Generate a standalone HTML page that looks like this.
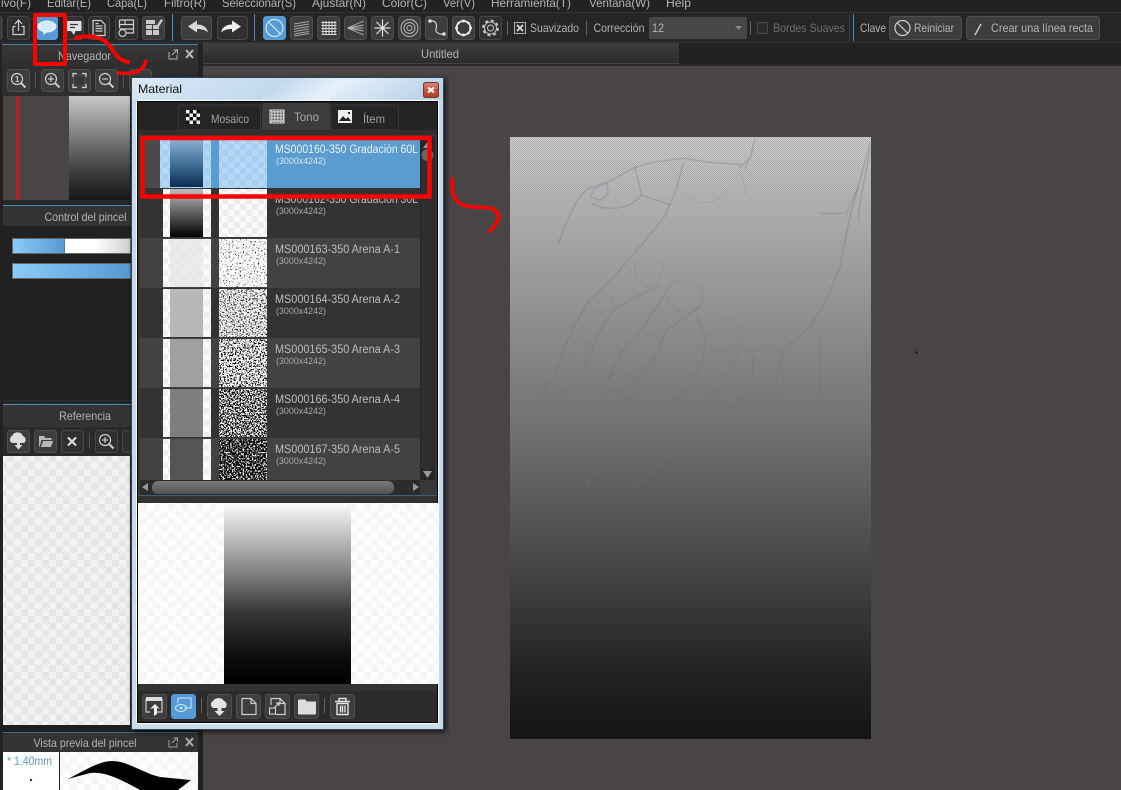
<!DOCTYPE html>
<html lang="es"><head><meta charset="utf-8"><title>Material</title>
<style>
html,body{margin:0;padding:0;background:#4a4545;width:1121px;height:790px;overflow:hidden}
svg{display:block;font-family:"Liberation Sans",sans-serif;filter:blur(.3px)}
.b{fill:#3d3d3d;stroke:#4f4f4f;stroke-width:1}
.d{fill:#303030;stroke:#484848;stroke-width:1}
.bl{fill:#569bd6;stroke:#569bd6;stroke-width:1}
.t{fill:#b4b4b4;font-size:12px}
.g{fill:none;stroke:#cfcfcf;stroke-width:1.2}
.w{fill:#e0e0e0}
.n{fill:#bdbdbd;font-size:11.500px}
.s{fill:#a8a8a8;font-size:9.500px}
.sk{fill:none;stroke:#6c6c8c;stroke-opacity:.3;stroke-width:4.500;stroke-linejoin:round;stroke-linecap:round}
.skf{fill:none;stroke:#6c6c8c;stroke-opacity:.16;stroke-width:3.500;stroke-linejoin:round}
.r{fill:none;stroke:#f00;stroke-linecap:round;stroke-linejoin:round}
</style></head><body>
<svg xmlns="http://www.w3.org/2000/svg" width="1121" height="790" viewBox="0 0 1121 790">
<defs>
<pattern id="ck" width="14" height="14" patternUnits="userSpaceOnUse"><rect width="14" height="14" fill="#f2f2f2"/><rect width="7" height="7" fill="#e6e6e6"/><rect x="7" y="7" width="7" height="7" fill="#e6e6e6"/></pattern>
<pattern id="ck2" width="14" height="14" patternUnits="userSpaceOnUse"><rect width="14" height="14" fill="#fff"/><rect width="7" height="7" fill="#f6f6f6"/><rect x="7" y="7" width="7" height="7" fill="#f6f6f6"/></pattern>
<pattern id="ck3" width="12" height="12" patternUnits="userSpaceOnUse"><rect width="12" height="12" fill="#fbfbfb"/><rect width="6" height="6" fill="#eee"/><rect x="6" y="6" width="6" height="6" fill="#eee"/></pattern>
<pattern id="ckb" width="12" height="12" patternUnits="userSpaceOnUse"><rect width="12" height="12" fill="#b5d9f5"/><rect width="6" height="6" fill="#a6cef0"/><rect x="6" y="6" width="6" height="6" fill="#a6cef0"/></pattern>
<pattern id="ht" width="2" height="2" patternUnits="userSpaceOnUse"><rect width="1" height="1" fill="#000" fill-opacity=".1"/><rect x="1" y="1" width="1" height="1" fill="#000" fill-opacity=".1"/></pattern>
<pattern id="dots" width="3" height="3" patternUnits="userSpaceOnUse"><rect width="3" height="3" fill="#2a2a2a"/><rect width="1" height="1" fill="#111"/></pattern>
<linearGradient id="cv" x1="0" y1="0" x2="0" y2="1"><stop offset="0" stop-color="#cacaca"/><stop offset=".25" stop-color="#9f9f9f"/><stop offset=".5" stop-color="#747474"/><stop offset=".75" stop-color="#424242"/><stop offset=".9" stop-color="#222"/><stop offset="1" stop-color="#161616"/></linearGradient>
<linearGradient id="mini" x1="0" y1="0" x2="0" y2="1"><stop offset="0" stop-color="#c8c8c8"/><stop offset=".35" stop-color="#858585"/><stop offset=".7" stop-color="#424242"/><stop offset="1" stop-color="#161616"/></linearGradient>
<linearGradient id="gp" x1="0" y1="0" x2="0" y2="1"><stop offset="0" stop-color="#fbfbfb"/><stop offset=".12" stop-color="#d4d4d4"/><stop offset=".35" stop-color="#8c8c8c"/><stop offset=".6" stop-color="#383838"/><stop offset=".85" stop-color="#0c0c0c"/><stop offset="1" stop-color="#000"/></linearGradient>
<linearGradient id="gb" x1="0" y1="0" x2="0" y2="1"><stop offset="0" stop-color="#8fb4d4"/><stop offset=".5" stop-color="#47749c"/><stop offset="1" stop-color="#082c52"/></linearGradient>
<linearGradient id="gk" x1="0" y1="0" x2="0" y2="1"><stop offset="0" stop-color="#bdbdbd"/><stop offset=".5" stop-color="#5f5f5f"/><stop offset="1" stop-color="#000"/></linearGradient>
<linearGradient id="hd" x1="0" y1="0" x2="0" y2="1"><stop offset="0" stop-color="#383838"/><stop offset="1" stop-color="#2e2e2e"/></linearGradient>
<linearGradient id="tab" x1="0" y1="0" x2="0" y2="1"><stop offset="0" stop-color="#3e3e3e"/><stop offset="1" stop-color="#2b2b2b"/></linearGradient>
<linearGradient id="bfill" x1="0" y1="0" x2="1" y2="0"><stop offset="0" stop-color="#8bcbf9"/><stop offset="1" stop-color="#569ad4"/></linearGradient>
<linearGradient id="wfade" x1="0" y1="0" x2="1" y2="0"><stop offset=".7" stop-color="#fff"/><stop offset="1" stop-color="#d0d0d0"/></linearGradient>
<linearGradient id="glass" x1="0" y1="0" x2="1" y2="0.1"><stop offset="0" stop-color="#d9e8f5"/><stop offset=".5" stop-color="#c2d9ee"/><stop offset=".68" stop-color="#e6f0f9"/><stop offset="1" stop-color="#bcd4ea"/></linearGradient>
<linearGradient id="cl" x1="0" y1="0" x2="0" y2="1"><stop offset="0" stop-color="#d98a75"/><stop offset=".5" stop-color="#c4553c"/><stop offset="1" stop-color="#b33e28"/></linearGradient>
<linearGradient id="thb" x1="0" y1="0" x2="0" y2="1"><stop offset="0" stop-color="#7a7a7a"/><stop offset="1" stop-color="#545454"/></linearGradient>
<filter id="shadow" x="-10%" y="-10%" width="125%" height="120%"><feDropShadow dx="2" dy="2" stdDeviation="3" flood-color="#000" flood-opacity=".7"/></filter>
<filter id="n1" x="0" y="0" width="100%" height="100%" color-interpolation-filters="sRGB"><feTurbulence type="fractalNoise" baseFrequency=".65" numOctaves="2" seed="3"/><feColorMatrix values="6 0 0 0 -1.400 6 0 0 0 -1.400 6 0 0 0 -1.400 0 0 0 0 1"/></filter>
<filter id="n2" x="0" y="0" width="100%" height="100%" color-interpolation-filters="sRGB"><feTurbulence type="fractalNoise" baseFrequency=".65" numOctaves="2" seed="8"/><feColorMatrix values="4 0 0 0 -1.100 4 0 0 0 -1.100 4 0 0 0 -1.100 0 0 0 0 1"/></filter>
<filter id="n3" x="0" y="0" width="100%" height="100%" color-interpolation-filters="sRGB"><feTurbulence type="fractalNoise" baseFrequency=".65" numOctaves="2" seed="12"/><feColorMatrix values="10 0 0 0 -3.900 10 0 0 0 -3.900 10 0 0 0 -3.900 0 0 0 0 1"/></filter>
<filter id="n4" x="0" y="0" width="100%" height="100%" color-interpolation-filters="sRGB"><feTurbulence type="fractalNoise" baseFrequency=".65" numOctaves="2" seed="21"/><feColorMatrix values="9 0 0 0 -4 9 0 0 0 -4 9 0 0 0 -4 0 0 0 0 1"/></filter>
<filter id="n5" x="0" y="0" width="100%" height="100%" color-interpolation-filters="sRGB"><feTurbulence type="fractalNoise" baseFrequency=".65" numOctaves="2" seed="33"/><feColorMatrix values="6 0 0 0 -2.900 6 0 0 0 -2.900 6 0 0 0 -2.900 0 0 0 0 1"/></filter>
</defs>

<!-- base -->
<rect width="1121" height="790" fill="#4a4545"/>
<rect width="1121" height="65" fill="#222"/>
<rect y="12" width="1121" height="30" fill="#252525"/>
<rect y="12" width="1121" height="1" fill="#333"/>
<rect y="42" width="1121" height="1" fill="#333"/>

<!-- menu -->
<text x="1" y="7" class="t" textLength="30" lengthAdjust="spacingAndGlyphs">ivo(F)</text>
<text x="47" y="7" class="t" textLength="44" lengthAdjust="spacingAndGlyphs">Editar(E)</text>
<text x="107" y="7" class="t" textLength="40" lengthAdjust="spacingAndGlyphs">Capa(L)</text>
<text x="164" y="7" class="t" textLength="42" lengthAdjust="spacingAndGlyphs">Filtro(R)</text>
<text x="222" y="7" class="t" textLength="74" lengthAdjust="spacingAndGlyphs">Seleccionar(S)</text>
<text x="312" y="7" class="t" textLength="54" lengthAdjust="spacingAndGlyphs">Ajustar(N)</text>
<text x="382" y="7" class="t" textLength="45" lengthAdjust="spacingAndGlyphs">Color(C)</text>
<text x="443" y="7" class="t" textLength="32" lengthAdjust="spacingAndGlyphs">Ver(V)</text>
<text x="491" y="7" class="t" textLength="80" lengthAdjust="spacingAndGlyphs">Herramienta(T)</text>
<text x="589" y="7" class="t" textLength="61" lengthAdjust="spacingAndGlyphs">Ventana(W)</text>
<text x="666" y="7" class="t" textLength="25" lengthAdjust="spacingAndGlyphs">Help</text>

<!-- toolbar buttons -->
<rect x="-20" y="16.500" width="22" height="23" rx="3" class="b"/>
<rect x="7.500" y="16.500" width="22" height="23" rx="3" class="d"/>
<path d="M13 26.500v8h11v-8h-2.500M15.500 26.500H13M18.500 31V20.500M15 24l3.500-4 3.500 4" class="g" stroke-width="1.500"/>
<rect x="36.500" y="16.500" width="21" height="23" rx="3" class="bl"/>
<ellipse cx="47" cy="26.500" rx="9.500" ry="6" fill="#e0f0fb"/><path d="M43 31l.5 4 4.500-3.500z" fill="#e0f0fb"/>
<path d="M41 26.500h12M40 24h14M40 29h13" stroke="#a9d3ef" stroke-width=".6" fill="none"/>
<rect x="63.500" y="16.500" width="20" height="23" rx="3" class="d"/>
<path d="M67 21h13.500a1 1 0 0 1 1 1v8a1 1 0 0 1-1 1h-5l-1.500 4-3-4h-4a1 1 0 0 1-1-1v-8a1 1 0 0 1 1-1z" class="w"/>
<path d="M70 24.500h8M70 27.500h5" stroke="#333" stroke-width="1.300"/>
<rect x="88.500" y="16.500" width="21" height="23" rx="3" class="d"/>
<path d="M93 20.500h8l4 4v11h-12z M95.500 26h7M95.500 28.500h7M95.500 31h7M95.500 23.500h3" class="g" stroke-width="1"/>
<rect x="115.500" y="16.500" width="22" height="23" rx="3" class="d"/>
<path d="M119.500 20h14v13h-7M119.500 20v8M119.500 24.500h14M119.500 29h14M125 20v5" class="g" stroke-width="1"/><circle cx="122.500" cy="33" r="3.500" class="g" stroke-width="1"/>
<rect x="142.500" y="16.500" width="22" height="23" rx="3" class="b"/>
<path d="M146 25h6v4h-6zM153 25h6v4h-6zM146 30h6v5h-6zM153 30h6v5h-6zM146 20h9v4h-9z" fill="#c8c8c8"/><path d="M157 25l4-6 2 1.500-4 6z" fill="#c8c8c8"/>
<rect x="172" y="14" width="1" height="27" fill="#4b8ab8"/>
<rect x="181.500" y="16.500" width="30" height="23" rx="3" class="b"/>
<path d="M188 26.500l9-6v4c6 0 10 3 11 8-3-2.500-6-3.500-11-3.500v3.500z" fill="#d8d8d8"/>
<rect x="217.500" y="16.500" width="30" height="23" rx="3" class="d"/>
<path d="M241 26.500l-9-6v4c-6 0-10 3-11 8 3-2.500 6-3.500 11-3.500v3.500z" fill="#eee"/>
<rect x="254" y="14" width="1" height="27" fill="#4b8ab8"/>
<rect x="263.500" y="16.500" width="22" height="23" rx="3" class="bl"/>
<circle cx="274.500" cy="28" r="8.500" fill="none" stroke="#cfe8f8" stroke-width="1.200"/><path d="M268.500 22l12 12" stroke="#cfe8f8" stroke-width="1.200"/>
<rect x="290.500" y="16.500" width="22" height="23" rx="3" class="b"/>
<path d="M294 24l15-2.500M294 26.500l15-2.500M294 29l15-2.500M294 31.500l15-2.500M294 34l15-2.500M294 36l15-2.500" stroke="#a8a8a8" stroke-width=".9" fill="none"/>
<rect x="317.500" y="16.500" width="22" height="23" rx="3" class="b"/>
<path d="M323 21v14M326 21v14M329 21v14M332 21v14M335 21v14M321.500 22.500h15M321.500 25.500h15M321.500 28.500h15M321.500 31.500h15M321.500 34.500h15" stroke="#dcdcdc" stroke-width="1" fill="none"/>
<rect x="344.500" y="16.500" width="22" height="23" rx="3" class="b"/>
<path d="M347.500 28l16-7M347.500 28l16-3M347.500 28h16M347.500 28l16 3M347.500 28l16 7" stroke="#b8b8b8" stroke-width=".9" fill="none"/>
<rect x="371.500" y="16.500" width="22" height="23" rx="3" class="b"/>
<path d="M382.500 19.500v17M374.500 28h16M376.500 22l12 12M388.500 22l-12 12" stroke="#e0e0e0" stroke-width="1.200" fill="none"/>
<rect x="398.500" y="16.500" width="22" height="23" rx="3" class="b"/>
<circle cx="409.500" cy="28" r="8.500" fill="none" stroke="#b8b8b8" stroke-width="1"/><circle cx="409.500" cy="28" r="5.500" fill="none" stroke="#b8b8b8" stroke-width="1"/><circle cx="409.500" cy="28" r="2.500" fill="none" stroke="#b8b8b8" stroke-width="1"/>
<rect x="425.500" y="16.500" width="22" height="23" rx="3" class="b"/>
<path d="M430 21c7-1 7 5 6 8-1 3 3 6 8 5" class="g" stroke-width="1.300"/><circle cx="430" cy="21" r="1.800" fill="#ddd"/><circle cx="444" cy="34" r="1.800" fill="#ddd"/>
<rect x="452.500" y="16.500" width="22" height="23" rx="3" class="b"/>
<circle cx="463.500" cy="28" r="7" fill="none" stroke="#eee" stroke-width="1.700"/>
<g fill="#eee"><circle cx="463.500" cy="21" r="1.500"/><circle cx="463.500" cy="35" r="1.500"/><circle cx="456.500" cy="28" r="1.500"/><circle cx="470.500" cy="28" r="1.500"/><circle cx="458.500" cy="23" r="1.300"/><circle cx="468.500" cy="23" r="1.300"/><circle cx="458.500" cy="33" r="1.300"/><circle cx="468.500" cy="33" r="1.300"/></g>
<rect x="479.500" y="16.500" width="22" height="23" rx="3" class="d"/>
<circle cx="490.500" cy="28" r="3" fill="none" stroke="#c8c8c8"/><circle cx="490.500" cy="28" r="6" fill="none" stroke="#c8c8c8"/><circle cx="490.500" cy="28" r="7.500" fill="none" stroke="#c8c8c8" stroke-width="1.800" stroke-dasharray="3 2.900"/>
<rect x="507" y="21" width="1" height="14" fill="#666"/>
<rect x="514.500" y="22.500" width="11" height="11" fill="#2e2e2e" stroke="#aaa"/><path d="M517 25l6 6M523 25l-6 6" stroke="#ddd" stroke-width="1.600"/>
<text x="530" y="32" class="t" textLength="49" lengthAdjust="spacingAndGlyphs">Suavizado</text>
<rect x="586" y="21" width="1" height="14" fill="#666"/>
<text x="593.500" y="32" class="t" textLength="51" lengthAdjust="spacingAndGlyphs">Corrección</text>
<rect x="649" y="17" width="98" height="22" rx="2" fill="#474747"/>
<text x="652" y="32" class="t" textLength="12" lengthAdjust="spacingAndGlyphs">12</text>
<path d="M735 26h7l-3.500 4z" fill="#888"/>
<rect x="750" y="21" width="1" height="14" fill="#666"/>
<rect x="757.500" y="22.500" width="10" height="11" fill="#2a2a2a" stroke="#484848"/>
<text x="773" y="32" fill="#6e6e6e" font-size="12" textLength="72" lengthAdjust="spacingAndGlyphs">Bordes Suaves</text>
<rect x="849" y="14" width="1" height="27" fill="#3a3a3a"/>
<rect x="853" y="14" width="1" height="27" fill="#4b8ab8"/>
<text x="860" y="32" class="t" textLength="26" lengthAdjust="spacingAndGlyphs">Clave</text>
<rect x="889.500" y="16.500" width="72" height="23" rx="3" class="b"/>
<circle cx="902.500" cy="28" r="7.500" class="g" stroke-width="1"/><path d="M897 22.500l11 11" class="g" stroke-width="1"/>
<text x="914" y="32" class="t" textLength="40" lengthAdjust="spacingAndGlyphs">Reiniciar</text>
<rect x="966.500" y="16.500" width="133" height="23" rx="3" class="b"/>
<path d="M975 35l6-11" stroke="#d0d0d0" stroke-width="1.400"/>
<text x="991" y="32" class="t" textLength="102" lengthAdjust="spacingAndGlyphs">Crear una línea recta</text>

<!-- tab bar -->
<rect x="203" y="43" width="476" height="20" fill="url(#tab)"/>
<rect x="203" y="63" width="476" height="1" fill="#444"/>
<text x="440" y="58" class="t" text-anchor="middle" textLength="38" lengthAdjust="spacingAndGlyphs">Untitled</text>
<rect x="203" y="64" width="918" height="2" fill="#2b2b2b"/>

<!-- left panel -->
<rect x="0" y="43" width="203" height="747" fill="#222"/>
<rect x="2" y="44" width="196" height="1" fill="#4b8ab8"/>
<rect x="2" y="45" width="196" height="21" fill="url(#hd)"/>
<text x="58" y="60" class="t" textLength="53" lengthAdjust="spacingAndGlyphs">Navegador</text>
<path d="M169 52v7h8v-4M172 55l5-5M173.500 50h4v4" fill="none" stroke="#b0b0b0" stroke-width="1"/>
<path d="M186 50l7 8M193 50l-7 8" stroke="#bbb" stroke-width="2"/>
<rect x="2" y="66" width="196" height="30" fill="#2e2e2e"/>
<rect x="7.500" y="69.500" width="22" height="22" rx="3" class="b"/>
<circle cx="17" cy="79" r="5.500" class="g"/><path d="M21 83l4.500 4.500" stroke="#ccc" stroke-width="2"/><text x="15" y="82" fill="#ccc" font-size="8" font-weight="bold">1</text>
<rect x="35" y="72" width="1" height="15" fill="#555"/>
<rect x="41.500" y="69.500" width="22" height="22" rx="3" class="b"/>
<circle cx="51" cy="79" r="5.500" class="g"/><path d="M55 83l4.500 4.500" stroke="#ccc" stroke-width="2"/><path d="M48 79h6M51 76v6" stroke="#ccc" stroke-width="1.200"/>
<rect x="68.500" y="69.500" width="22" height="22" rx="3" class="b"/>
<rect x="74" y="75" width="11" height="11" fill="#353535" stroke="#555"/><path d="M73 77v-3.500h4M86 77v-3.500h-4M73 84v3.500h4M86 84v3.500h-4" class="g" stroke-width="1.100"/>
<rect x="95.500" y="69.500" width="22" height="22" rx="3" class="b"/>
<circle cx="105" cy="79" r="5.500" class="g"/><path d="M109 83l4.500 4.500" stroke="#ccc" stroke-width="2"/><path d="M102 79h6" stroke="#ccc" stroke-width="1.200"/>
<rect x="123" y="72" width="1" height="15" fill="#555"/>
<rect x="129.500" y="69.500" width="22" height="22" rx="3" class="b"/>
<rect x="3" y="96" width="127" height="104" fill="#4a4545"/>
<rect x="16" y="96" width="3.500" height="104" fill="#b52025"/>
<rect x="69" y="96" width="61" height="104" fill="url(#mini)"/>
<rect x="3" y="200" width="127" height="4" fill="url(#dots)"/>
<rect x="3" y="205" width="195" height="1" fill="#4b8ab8"/>
<rect x="3" y="206" width="195" height="20" fill="#333"/>
<text x="44.500" y="221" class="t" textLength="82" lengthAdjust="spacingAndGlyphs">Control del pincel</text>
<rect x="3" y="226" width="195" height="174" fill="#212121"/>
<rect x="12.500" y="238.500" width="118" height="15" fill="url(#wfade)" stroke="#666"/>
<rect x="13" y="239" width="51" height="14" fill="url(#bfill)"/>
<rect x="64" y="239" width="1" height="14" fill="#4a7da8"/>
<rect x="12.500" y="263.500" width="118" height="15" fill="url(#bfill)" stroke="#666"/>
<rect x="3" y="400" width="195" height="4" fill="url(#dots)"/>
<rect x="3" y="404" width="195" height="1" fill="#4b8ab8"/>
<rect x="3" y="405" width="195" height="22" fill="#333"/>
<text x="59" y="420" class="t" textLength="52" lengthAdjust="spacingAndGlyphs">Referencia</text>
<rect x="3" y="427" width="195" height="29" fill="#2a2a2a"/>
<rect x="7.500" y="430.500" width="22" height="22" rx="3" class="b"/>
<path d="M12 443a4 4 0 0 1 0-7 6 6 0 0 1 11 0 4 4 0 0 1 1 7h-4v2h2.500l-4 4.500-4-4.500h2.500v-2z" fill="#ddd"/>
<rect x="34.500" y="430.500" width="22" height="22" rx="3" class="b"/>
<path d="M39 447v-11h5l1.500 2h6v2h-10l-2 7zM41 447l2-6h10l-2 6z" fill="#b8b8b8"/>
<rect x="61.500" y="430.500" width="22" height="22" rx="3" class="d"/>
<path d="M68 437.500l8 8M76 437.500l-8 8" stroke="#e0e0e0" stroke-width="2"/>
<rect x="89" y="433" width="1" height="16" fill="#555"/>
<rect x="95.500" y="430.500" width="22" height="22" rx="3" class="d"/>
<circle cx="105" cy="440" r="5.500" class="g"/><path d="M109 444l4.500 4.500" stroke="#ccc" stroke-width="2"/><path d="M102 440h6M105 437v6" stroke="#ccc" stroke-width="1.200"/>
<rect x="122.500" y="430.500" width="22" height="22" rx="3" class="d"/>
<rect x="3" y="456" width="127" height="269" fill="url(#ck)"/>
<rect x="0" y="725" width="200" height="7" fill="#1e1e1e"/>
<rect x="3" y="732" width="195" height="1" fill="#3d6f96"/>
<rect x="3" y="733" width="195" height="19" fill="#333"/>
<text x="33.500" y="747" class="t" textLength="103" lengthAdjust="spacingAndGlyphs">Vista previa del pincel</text>
<path d="M169 740v7h8v-4M172 743l5-5M173.500 738h4v4" fill="none" stroke="#a0a0a0" stroke-width="1"/>
<path d="M186 738l7 8M193 738l-7 8" stroke="#aaa" stroke-width="2"/>
<rect x="3" y="752" width="56" height="38" fill="#fff"/>
<text x="7" y="765" fill="#5b9bd0" font-size="11.500" textLength="45" lengthAdjust="spacingAndGlyphs">* 1.40mm</text>
<circle cx="31" cy="780" r="1.200" fill="#333"/>
<rect x="60" y="752" width="138" height="38" fill="url(#ck2)"/>
<path d="M68 779C85 770 100 761 112 761C128 761 140 772 160 777L191 780L178 790H140C122 780 105 771 90 773Z" fill="#000"/>

<!-- canvas -->
<rect x="510" y="137" width="361" height="602" fill="url(#cv)"/>
<rect x="510" y="137" width="361" height="602" fill="url(#ht)"/>
<g transform="translate(500 130) scale(.33333)">
<path class="sk" d="M175 340L205 265L235 205L265 175L325 155L405 112L470 95L550 85L630 97L720 103"/>
<path class="sk" d="M720 112L750 85L765 25M735 115L760 60"/>
<path class="skf" d="M720 120L740 195M555 190C590 230 650 230 690 170"/>
<path class="sk" d="M272 200L285 175L320 160L325 190L300 212Z"/>
<path class="sk" d="M275 220C320 245 390 240 425 195L510 225M405 112L425 195"/>
<path class="sk" d="M550 100L525 190L490 265L420 350L350 430L265 515L215 600L190 670L165 740L140 760L130 810L150 955L180 800L230 755L265 690L290 620L340 540L400 505L480 465"/>
<path class="skf" d="M405 385C400 420 410 460 440 470C475 470 495 430 490 390"/>
<path class="skf" d="M265 515C280 550 320 560 340 530C345 510 330 490 300 490"/>
<path class="sk" d="M520 450L490 500L430 590L370 660L330 730L310 800L275 870L265 980L265 1070L300 960L320 890L350 870L395 800L410 750L470 670L500 600L600 530"/>
<path class="skf" d="M500 495C505 530 540 555 580 545C610 530 620 490 600 470C575 445 540 445 520 465"/>
<path class="sk" d="M590 560L615 620L610 690L580 750L520 820L480 870L470 920L440 1010L400 1075L480 1000L540 950L620 900L700 870L760 870L820 790L850 660L930 590L980 510L1020 410L1050 260L1110 40"/>
<path class="sk" d="M730 650L690 720L640 800L600 860L520 940M730 650L760 680L755 760L730 800L660 860L660 900L700 900L720 830"/>
<path class="skf" d="M760 660L850 655M770 800L820 780M620 640C640 670 690 670 725 630C730 590 700 560 660 565M585 760C600 790 630 800 650 780M320 770C340 800 385 790 395 750C380 720 340 715 325 745M205 670C230 690 260 680 270 650C250 630 230 625 210 625M410 635C430 600 470 600 480 640"/>
<path class="sk" d="M960 250H1040M1040 250L1075 170M1075 270L1080 220L1110 60"/>
<path class="skf" d="M960 620V900M850 700V800"/>
</g>
<rect x="915.500" y="351.500" width="2" height="2" fill="#111"/>

<!-- dialog -->
<rect x="131.500" y="77.500" width="312" height="652" fill="#c9dcee" stroke="#2f4455" filter="url(#shadow)"/>
<rect x="132" y="78" width="311" height="22" fill="url(#glass)"/>
<rect x="132" y="100" width="4" height="626" fill="#c5d9ec"/>
<rect x="439" y="100" width="4" height="626" fill="#c5d9ec"/>
<text x="138" y="93" fill="#111" font-size="12" textLength="44" lengthAdjust="spacingAndGlyphs">Material</text>
<rect x="423.500" y="82.500" width="15" height="15" rx="2" fill="url(#cl)" stroke="#6e3a30"/>
<path d="M428 87.500l6 5M434 87.500l-6 5" stroke="#fff" stroke-width="2"/>
<rect x="136" y="100" width="303" height="624" fill="#fff"/>
<rect x="137" y="101" width="301" height="622" fill="#000"/>
<rect x="138" y="102" width="299" height="33" fill="#232323"/>
<rect x="138" y="130" width="299" height="6" fill="#303030"/>
<!-- tabs -->
<path d="M178.500 130v-23a2 2 0 0 1 2-2h80v25z" fill="#252525" stroke="#383838"/>
<path d="M331 130v-25h66a1.500 1.500 0 0 1 1.500 1.500v23.500z" fill="#252525" stroke="#383838"/>
<path d="M262 130v-25a2 2 0 0 1 2-2h64a2 2 0 0 1 2 2v25z" fill="#3c3c3c"/>
<rect x="186" y="110" width="14" height="14" fill="#f0f0f0"/>
<path d="M189.500 110h3.500v3.500h-3.500zM196.500 110h3.500v3.500h-3.500zM186 113.500h3.500v3.500H186zM193 113.500h3.500v3.500H193zM189.500 117h3.500v3.500h-3.500zM196.500 117h3.500v3.500h-3.500zM186 120.500h3.500v3.500H186zM193 120.500h3.500v3.500H193z" fill="#111"/>
<text x="211" y="123" fill="#a0a0a0" font-size="12" textLength="38" lengthAdjust="spacingAndGlyphs">Mosaico</text>
<rect x="270" y="110" width="14" height="13" fill="#b8b8b8" stroke="#ddd"/>
<path d="M270 113h14M270 116h14M270 119h14M273 110v13M276 110v13M279 110v13M282 110v13" stroke="#444" stroke-dasharray="1 2" fill="none"/>
<text x="294" y="121" fill="#a8a8a8" font-size="12" textLength="25" lengthAdjust="spacingAndGlyphs">Tono</text>
<rect x="338" y="110" width="14" height="13" fill="#f0f0f0"/>
<path d="M339 121l4-5 3 3 2-2 3 4zM348 112h2v2h-2z" fill="#222"/>
<text x="363" y="123" fill="#a0a0a0" font-size="12" textLength="22" lengthAdjust="spacingAndGlyphs">Ítem</text>

<!-- list -->
<rect x="138" y="135" width="299" height="360" fill="#383838"/>
<rect x="140" y="138" width="280" height="50" fill="#4a4a4a"/>
<rect x="160" y="138" width="260" height="50" fill="#5a9bd0"/>
<rect x="160" y="138" width="51" height="50" fill="url(#ckb)"/>
<rect x="170" y="138" width="33" height="49" fill="url(#gb)"/>
<rect x="219" y="138" width="48" height="50" fill="url(#ckb)"/>
<text x="275" y="153" fill="#e8f2fa" font-size="11.500" textLength="143" lengthAdjust="spacingAndGlyphs">MS000160-350 Gradación 60L</text>
<text x="276" y="164" fill="#d8e8f4" font-size="9.500" textLength="50" lengthAdjust="spacingAndGlyphs">(3000x4242)</text>

<rect x="140" y="188" width="280" height="50" fill="#343333"/>
<rect x="163" y="189" width="48" height="48" fill="url(#ck3)"/>
<rect x="170" y="189" width="33" height="48" fill="url(#gk)"/>
<rect x="219" y="189" width="48" height="48" fill="url(#ck3)"/>
<text x="275" y="203" class="n" textLength="143" lengthAdjust="spacingAndGlyphs">MS000162-350 Gradación 30L</text>
<text x="276" y="214" class="s" textLength="50" lengthAdjust="spacingAndGlyphs">(3000x4242)</text>

<rect x="140" y="238" width="280" height="50" fill="#434141"/>
<rect x="163" y="239" width="48" height="48" fill="url(#ck3)"/>
<rect x="170" y="239" width="33" height="48" fill="#e6e6e6" fill-opacity=".7"/>
<rect x="219" y="239" width="48" height="48" filter="url(#n1)"/>
<text x="275" y="253" class="n" textLength="125" lengthAdjust="spacingAndGlyphs">MS000163-350 Arena A-1</text>
<text x="276" y="264" class="s" textLength="50" lengthAdjust="spacingAndGlyphs">(3000x4242)</text>

<rect x="140" y="288" width="280" height="50" fill="#343333"/>
<rect x="163" y="289" width="48" height="48" fill="url(#ck3)"/>
<rect x="170" y="289" width="33" height="48" fill="#b8b8b8"/>
<rect x="219" y="289" width="48" height="48" filter="url(#n2)"/>
<text x="275" y="303" class="n" textLength="125" lengthAdjust="spacingAndGlyphs">MS000164-350 Arena A-2</text>
<text x="276" y="314" class="s" textLength="50" lengthAdjust="spacingAndGlyphs">(3000x4242)</text>

<rect x="140" y="338" width="280" height="50" fill="#434141"/>
<rect x="163" y="339" width="48" height="48" fill="url(#ck3)"/>
<rect x="170" y="339" width="33" height="48" fill="#a0a0a0"/>
<rect x="219" y="339" width="48" height="48" filter="url(#n3)"/>
<text x="275" y="353" class="n" textLength="125" lengthAdjust="spacingAndGlyphs">MS000165-350 Arena A-3</text>
<text x="276" y="364" class="s" textLength="50" lengthAdjust="spacingAndGlyphs">(3000x4242)</text>

<rect x="140" y="388" width="280" height="50" fill="#343333"/>
<rect x="163" y="389" width="48" height="48" fill="url(#ck3)"/>
<rect x="170" y="389" width="33" height="48" fill="#7e7e7e"/>
<rect x="219" y="389" width="48" height="48" filter="url(#n4)"/>
<text x="275" y="403" class="n" textLength="125" lengthAdjust="spacingAndGlyphs">MS000166-350 Arena A-4</text>
<text x="276" y="414" class="s" textLength="50" lengthAdjust="spacingAndGlyphs">(3000x4242)</text>

<rect x="140" y="438" width="280" height="42" fill="#434141"/>
<rect x="163" y="439" width="48" height="41" fill="url(#ck3)"/>
<rect x="170" y="439" width="33" height="41" fill="#555"/>
<rect x="219" y="439" width="48" height="41" filter="url(#n5)"/>
<text x="275" y="453" class="n" textLength="125" lengthAdjust="spacingAndGlyphs">MS000167-350 Arena A-5</text>
<text x="276" y="464" class="s" textLength="50" lengthAdjust="spacingAndGlyphs">(3000x4242)</text>

<!-- scrollbars -->
<rect x="420" y="137" width="15" height="343" fill="#262626"/>
<rect x="421" y="150" width="13" height="320" rx="5" fill="#2e2e2e"/>
<circle cx="427.500" cy="155" r="6" fill="#666"/>
<path d="M423 148l4.500-6 4.500 6z" fill="#999"/>
<path d="M423 471h9l-4.500 7z" fill="#999"/>
<rect x="140" y="480" width="280" height="15" fill="#2c2c2c"/>
<rect x="152" y="481" width="242" height="13" rx="6" fill="url(#thb)"/>
<path d="M148 483v8l-6-4zM413 483v8l6-4z" fill="#999"/>
<rect x="138" y="495" width="299" height="1" fill="#3d5f7c"/>
<rect x="138" y="496" width="299" height="7" fill="#333"/>

<!-- preview -->
<rect x="138" y="503" width="300" height="181" fill="url(#ck2)"/>
<rect x="224" y="503" width="127" height="181" fill="url(#gp)"/>
<rect x="138" y="684" width="299" height="7" fill="#333"/>
<rect x="138" y="691" width="299" height="31" fill="#2b2b2b"/>
<rect x="142.500" y="694.500" width="24" height="24" rx="3" class="b"/>
<path d="M146 699h16v13h-5M150 712h-4v-13" class="g"/><rect x="146" y="697" width="16" height="4" fill="#ddd"/>
<path d="M154 716v-8l-4 1 5-5 5 5-3-1v6z" fill="#eee"/>
<rect x="171.500" y="694.500" width="24" height="24" rx="3" class="bl"/>
<path d="M178 703v-5h13v10h-7" fill="none" stroke="#cfe8f8" stroke-width="1"/><ellipse cx="181" cy="708" rx="5.500" ry="3.500" fill="none" stroke="#cfe8f8"/><circle cx="181" cy="708" r="1.300" fill="#cfe8f8"/>
<rect x="201" y="698" width="1" height="15" fill="#666"/>
<rect x="207.500" y="694.500" width="24" height="24" rx="3" class="b"/>
<path d="M213 708a4 4 0 0 1 0-7 6.500 6.500 0 0 1 11 0 4 4 0 0 1 1 7h-3.500v3h3l-5 5-5-5h3v-3z" fill="#e4e4e4"/>
<rect x="236.500" y="694.500" width="24" height="24" rx="3" class="b"/>
<path d="M242 698.500h9l5 5v11h-14zM251 698.500v5h5" class="g"/>
<rect x="265.500" y="694.500" width="24" height="24" rx="3" class="b"/>
<path d="M271 705v-6.500h9l5 5v11h-9M280 698.500v5h5" class="g"/><rect x="269.500" y="708" width="6" height="6" fill="none" stroke="#ddd"/><path d="M274 708l5-5M276 703h3v3" class="g"/>
<rect x="294.500" y="694.500" width="24" height="24" rx="3" class="b"/>
<path d="M298 700.500a1 1 0 0 1 1-1h6l2 2h8a1 1 0 0 1 1 1v11a1 1 0 0 1-1 1h-16a1 1 0 0 1-1-1z" fill="#ddd"/>
<rect x="324" y="698" width="1" height="15" fill="#666"/>
<rect x="330.500" y="694.500" width="24" height="24" rx="3" class="b"/>
<path d="M335 701.500h15M339 701v-2.500h7v2.500M337 703.500h11v11h-11zM340.500 705.500v7M342.500 705.500v7M345 705.500v7" fill="none" stroke="#e4e4e4" stroke-width="1.400"/>

<!-- red annotations -->
<g class="r">
<rect x="35" y="15" width="30" height="49" stroke-width="4" stroke-linecap="butt"/>
<path d="M76 38C92 34 104 38 110 46C116 55 118 60 128 62" stroke-width="4"/>
<path d="M119 73C130 74 138 73 142 68C145 66 145 63 146 61" stroke-width="3.500"/>
<rect x="142.500" y="138" width="287" height="58.500" stroke-width="4.500" stroke-linejoin="miter"/>
<path d="M452 179C451 192 454 203 466 206C476 208 484 207 491 208C496 210 499 214 499 217C498 222 494 227 490 231" stroke-width="3.500"/>
</g>
</svg>
</body></html>
